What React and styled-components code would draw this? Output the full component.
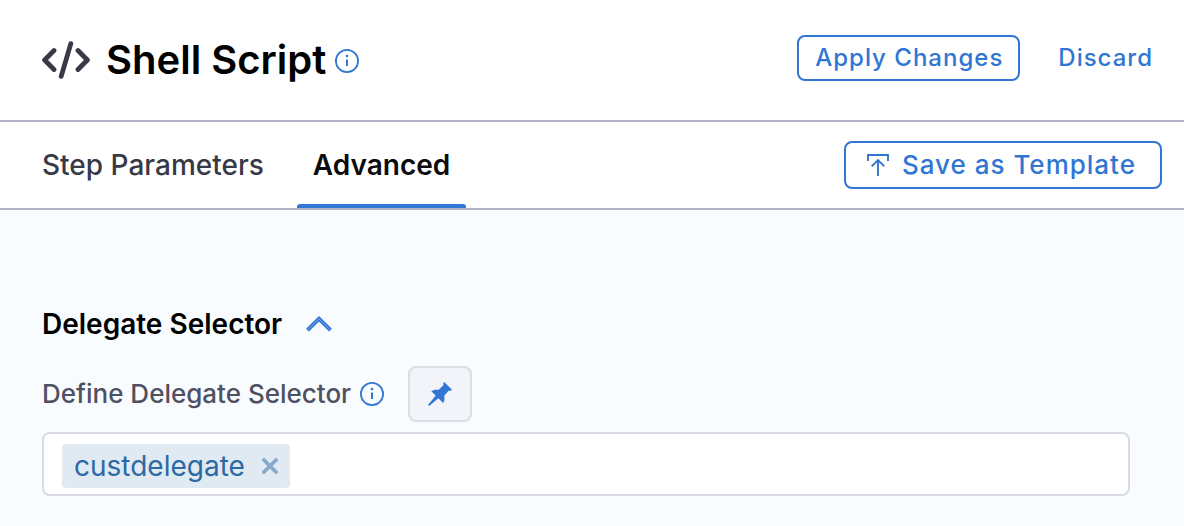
import React, { useState } from "react";
import styled, { createGlobalStyle } from "styled-components";

const blue = "#3076d2";

const GlobalStyle = createGlobalStyle`
  *, *::before, *::after { box-sizing: border-box; }
  body {
    margin: 0;
    background: #f8fcff;
    font-family: Inter, "Liberation Sans", sans-serif;
    -webkit-font-smoothing: antialiased;
  }
  button, input { font-family: inherit; }
  h1, h2 { margin: 0; }
  svg { display: block; flex: none; }
`;

const Page = styled.main`
  min-height: 100vh;
  background: #f8fcff;
`;

const Header = styled.header`
  display: flex;
  align-items: center;
  justify-content: space-between;
  height: 122px;
  padding: 0 14px 0 42px;
  background: #fff;
  border-bottom: 2px solid #b0b1c4;
`;

const TitleGroup = styled.div`
  display: flex;
  align-items: center;
`;

const Title = styled.h1`
  margin: 0 9px 0 16px;
  font-size: 40px;
  line-height: 48px;
  font-weight: 600;
  color: #000;
`;

const IconButton = styled.button`
  display: flex;
  padding: 0;
  border: 0;
  background: none;
  color: ${blue};
  cursor: pointer;
`;

const TitleInfo = styled(IconButton)`
  padding-top: 2px;
`;

const Actions = styled.div`
  display: flex;
  align-items: center;
  gap: 20px;
  padding-bottom: 4px;
`;

const Button = styled.button`
  display: flex;
  align-items: center;
  justify-content: center;
  gap: 13px;
  height: ${(p) => (p.$large ? 48 : 46)}px;
  padding: 0 ${(p) => (p.$large ? 24 : 15)}px 2px ${(p) => (p.$large ? 21 : 16)}px;
  border: 2px solid ${(p) => (p.$plain ? "transparent" : blue)};
  border-radius: 8px;
  background: ${(p) => (p.$plain ? "none" : "#fff")};
  color: ${blue};
  font-size: ${(p) => (p.$large ? 26 : 24)}px;
  font-weight: 500;
  letter-spacing: 1px;
  white-space: nowrap;
  cursor: pointer;
`;

const TabBar = styled.div`
  display: flex;
  align-items: center;
  justify-content: space-between;
  height: 88px;
  padding: 0 22px 0 26px;
  background: #fff;
  border-bottom: 2px solid #b0b1c4;
`;

const TabList = styled.div`
  display: flex;
  align-self: stretch;
  gap: 17px;
`;

const Tab = styled.button`
  display: flex;
  flex-direction: column;
  padding: 0;
  border: 0;
  background: none;
  color: ${(p) => (p.$active ? "#0b0b0d" : "#383946")};
  font-size: 28px;
  line-height: 34px;
  font-weight: ${(p) => (p.$active ? 600 : 500)};
  white-space: nowrap;
  cursor: pointer;

  &::after {
    content: "";
    align-self: stretch;
    height: 4px;
    margin-top: auto;
    border-radius: 3px 3px 0 0;
    background: ${(p) => (p.$active ? blue : "transparent")};
  }
`;

const TabLabel = styled.span`
  padding: 26px 16px 0;
`;

const Content = styled.section`
  padding: 96px 54px 30px 42px;
`;

const SectionHead = styled.div`
  display: flex;
  align-items: center;
  gap: 24px;
  height: 36px;
`;

const SectionTitle = styled.h2`
  font-size: 28px;
  line-height: 36px;
  font-weight: 600;
  color: #000;
`;

const FieldHead = styled.div`
  display: flex;
  align-items: center;
  margin: 24px 0 10px;
`;

const Label = styled.label`
  margin-right: 9px;
  font-size: 26px;
  line-height: 32px;
  font-weight: 500;
  color: #4f5162;
`;

const PinButton = styled(IconButton)`
  align-items: center;
  justify-content: center;
  width: 64px;
  height: 56px;
  margin-left: 24px;
  border: 2px solid #dcdce5;
  border-radius: 8px;
  background: #f3f3fa;
`;

const TagField = styled.div`
  display: flex;
  align-items: center;
  gap: 8px;
  height: 64px;
  padding: 4px 18px 0;
  border: 2px solid #d9dae5;
  border-radius: 8px;
  background: #fff;
`;

const Tag = styled.span`
  display: flex;
  align-items: center;
  gap: 17px;
  height: 44px;
  padding: 0 12px;
  border-radius: 4px;
  background: #e0eaf2;
  color: #2c69a3;
  font-size: 28px;
`;

const RemoveButton = styled(IconButton)`
  color: #86a9ca;
`;

const TagInput = styled.input`
  flex: 1;
  min-width: 0;
  height: 40px;
  padding: 0;
  border: 0;
  outline: 0;
  background: none;
  font-size: 28px;
`;

const CodeIcon = () => (
  <svg width="48" height="38" viewBox="0 0 48 38" fill="none" stroke="#383946" strokeWidth="4.8" strokeLinecap="round" strokeLinejoin="round" aria-hidden="true">
    <path d="M12 9.5 2.6 19 12 28.5M36 9.5 45.4 19 36 28.5M28.8 2.6 19.2 35.4" />
  </svg>
);

const InfoIcon = () => (
  <svg width="24" height="24" viewBox="0 0 24 24" fill="none" stroke="currentColor" aria-hidden="true">
    <circle cx="12" cy="12" r="11.1" strokeWidth="1.8" />
    <path d="M12 10.5V17" strokeWidth="2" />
    <circle cx="12" cy="7" r="1.3" fill="currentColor" stroke="none" />
  </svg>
);

const TemplateIcon = () => (
  <svg width="22" height="24" viewBox="0 0 22 24" fill="none" stroke="currentColor" strokeWidth="1.9" aria-hidden="true">
    <path d="M1 9V3H21V9M11 24V8M4.7 14.3 11 8l6.3 6.3" />
  </svg>
);

const ChevronIcon = () => (
  <svg width="26" height="16" viewBox="0 0 26 16" fill="none" aria-hidden="true">
    <path d="M1.5 14.2 13 2.8l11.500 11.400" stroke={blue} strokeWidth="4" />
    <path d="M1.500 14.200 13 2.800l11.500 11.400" stroke="#8fb5e8" strokeWidth="0.8" />
  </svg>
);

const PinIcon = () => (
  <svg width="24" height="24" viewBox="0 0 24 24" fill="currentColor" aria-hidden="true">
    <path d="M16.200 0C15.200.8 15 2 15.500 3.200L10.300 7.900C7.900 7.300 5.500 7.700 3.300 9.200L7.700 13.600 0 22.900 1.100 24 10.300 16.300 15.200 21C16.600 18.600 16.900 16.200 16.200 13.700L20.900 8.500C22 9 23.200 8.700 24 7.800z" />
  </svg>
);

const CrossIcon = () => (
  <svg width="16" height="16" viewBox="0 0 16 16" fill="none" stroke="currentColor" strokeWidth="3.8" strokeLinecap="round" aria-hidden="true">
    <path d="m2 2 12 12M14 2 2 14" />
  </svg>
);

export default function App() {
  const [tab, setTab] = useState("Advanced");
  const [tags, setTags] = useState(["custdelegate"]);
  const [open, setOpen] = useState(true);

  return (
    <Page>
      <GlobalStyle />
      <Header>
        <TitleGroup>
          <CodeIcon />
          <Title>Shell Script</Title>
          <TitleInfo type="button" aria-label="About this step"><InfoIcon /></TitleInfo>
        </TitleGroup>
        <Actions>
          <Button type="button">Apply Changes</Button>
          <Button type="button" $plain>Discard</Button>
        </Actions>
      </Header>
      <TabBar>
        <TabList role="tablist">
          {["Step Parameters", "Advanced"].map((name) => (
            <Tab key={name} type="button" role="tab" aria-selected={tab === name} $active={tab === name} onClick={() => setTab(name)}>
              <TabLabel>{name}</TabLabel>
            </Tab>
          ))}
        </TabList>
        <Button type="button" $large><TemplateIcon />Save as Template</Button>
      </TabBar>
      <Content>
        <SectionHead>
          <SectionTitle>Delegate Selector</SectionTitle>
          <IconButton type="button" aria-label="Toggle section" aria-expanded={open} onClick={() => setOpen(!open)}>
            <ChevronIcon />
          </IconButton>
        </SectionHead>
        {open && (
          <>
            <FieldHead>
              <Label htmlFor="delegate">Define Delegate Selector</Label>
              <IconButton type="button" aria-label="About delegate selectors"><InfoIcon /></IconButton>
              <PinButton type="button" aria-label="Fixed value"><PinIcon /></PinButton>
            </FieldHead>
            <TagField>
              {tags.map((tag) => (
                <Tag key={tag}>
                  {tag}
                  <RemoveButton type="button" aria-label={`Remove ${tag}`} onClick={() => setTags(tags.filter((t) => t !== tag))}>
                    <CrossIcon />
                  </RemoveButton>
                </Tag>
              ))}
              <TagInput id="delegate" type="text" />
            </TagField>
          </>
        )}
      </Content>
    </Page>
  );
}
